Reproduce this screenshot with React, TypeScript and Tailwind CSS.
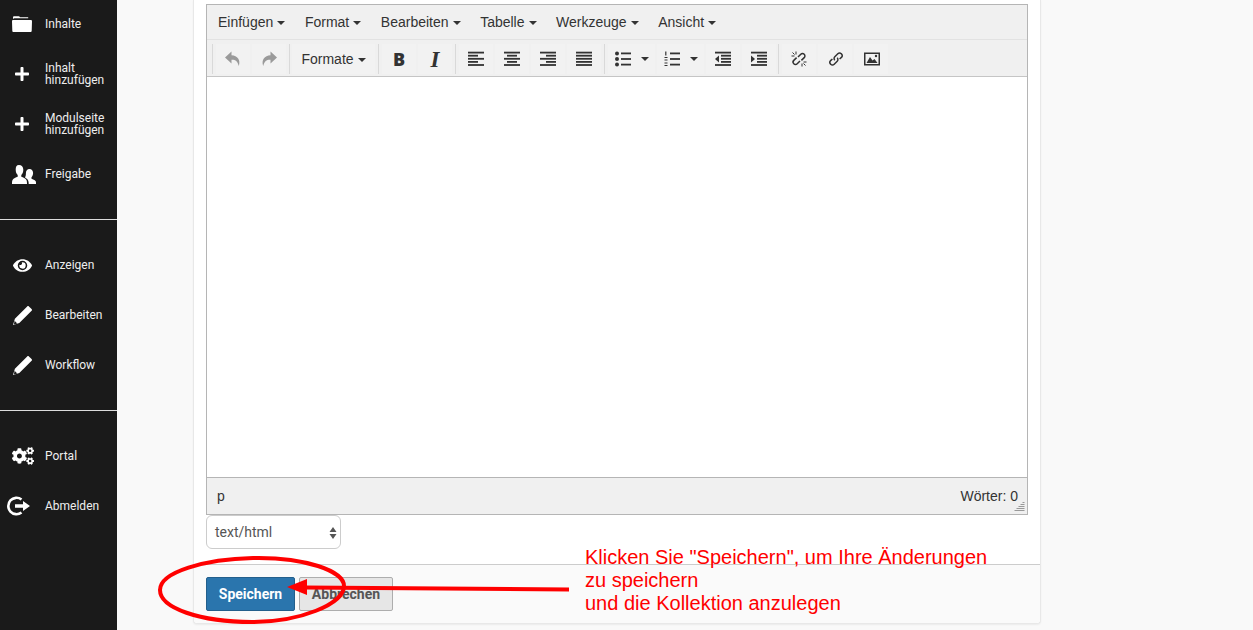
import { ReactNode } from "react"
import { FaCogs, FaEye, FaPlus } from "react-icons/fa"

const FolderIcon = () => (
  <svg viewBox="0 0 20 16" className="ml-[12px] w-[20px] h-[16px]" fill="currentColor">
    <path d="M1 1.500C1 .7 1.500 .3 2.200 .3h4.500c.6 0 1 .4 1.300 .9h8.200v1.100H2.500c-.8 0-1.300 .4-1.500 1z" />
    <path d="M0 5.200C0 4.400.5 3.900 1.300 3.900h17.400c.8 0 1.300 .5 1.300 1.300l-.3 9.500c0 .8-.5 1.300-1.300 1.300H1.600c-.8 0-1.300-.5-1.300-1.300z" />
  </svg>
)

const UsersIcon = () => (
  <svg viewBox="0 0 25 19" className="ml-[12px] w-[25px] h-[19px]" fill="currentColor">
    <path d="M7 0c2.600 0 4.300 2 4.300 4.800 0 2.300-.9 4.300-2 5.300v1.700c1.800.7 4.200 1.700 5 3 .6.900.7 2.300.7 4.200H0c0-1.900.1-3.300.7-4.200.8-1.300 3.200-2.300 5-3V10.100c-1.100-1-2-3-2-5.300C3.700 2 4.400 0 7 0z" />
    <path d="M17.500 4c2.300 0 3.600 1.700 3.600 4 0 1.900-.8 3.500-1.600 4.300v1.500c1.500.5 3.200 1.300 4 2.300.6.700.5 1.800.5 2.900h-7.300c0-2-.3-3.400-1.100-4.500-.6-.8-1.600-1.500-2.600-2.100.3-.6.600-1.200.7-1.900.2-.7.2-1.500.2-2.500C13.900 5.700 15.200 4 17.500 4z" />
  </svg>
)

const PencilIcon = () => (
  <svg viewBox="0 0 19 19" className="ml-[13px] w-[19px] h-[19px]" fill="currentColor">
    <path d="M14.200.4c.5-.5 1.200-.5 1.700 0l2.700 2.700c.5.5.5 1.200 0 1.700L6.300 17.100 0 19l1.900-6.300z" />
    <path d="M1.600 14.800l2.600 2.600-3.300 1z" fill="#1a1a1a" />
  </svg>
)

const LogoutIcon = () => (
  <svg viewBox="0 0 24 20" className="ml-[7px] w-[24px] h-[20px]" fill="none" stroke="currentColor">
    <path d="M14.500 3.500A8.200 8.200 0 1 0 14.500 16.500" strokeWidth="2.600" />
    <path d="M8 8.300h8V5l7 5-7 5v-3.300H8z" fill="currentColor" stroke="none" />
  </svg>
)

const navGroups: { label: ReactNode; icon: ReactNode }[][] = [
  [
    { label: "Inhalte", icon: <FolderIcon /> },
    { label: <>Inhalt<br />hinzufügen</>, icon: <FaPlus className="ml-[14px] w-[16px] h-[16px]" /> },
    { label: <>Modulseite<br />hinzufügen</>, icon: <FaPlus className="ml-[14px] w-[16px] h-[16px]" /> },
    { label: "Freigabe", icon: <UsersIcon /> },
  ],
  [
    { label: "Anzeigen", icon: <FaEye className="ml-[13px] w-[19px] h-[19px]" /> },
    { label: "Bearbeiten", icon: <PencilIcon /> },
    { label: "Workflow", icon: <PencilIcon /> },
  ],
  [
    { label: "Portal", icon: <FaCogs className="ml-[12px] w-[22px] h-[22px]" /> },
    { label: "Abmelden", icon: <LogoutIcon /> },
  ],
]

function NavItem({ label, icon }: { label: ReactNode; icon: ReactNode }) {
  return (
    <div className="relative flex items-center h-[50px] text-white">
      <div className="w-[45px] shrink-0 flex items-center">{icon}</div>
      <div className="text-[12px] leading-[12px] text-[#eeeeee]">{label}</div>
    </div>
  )
}

function Sidebar() {
  return (
    <div className="w-[117px] shrink-0 h-full bg-[#1a1a1a] font-['Roboto',sans-serif]">
      <div className="-mt-[1px] pb-[20px] border-b border-[#dddddd]">
        {navGroups[0].map((item, i) => <NavItem key={i} {...item} />)}
      </div>
      <div className="py-[20px] border-b border-[#dddddd]">
        {navGroups[1].map((item, i) => <NavItem key={i} {...item} />)}
      </div>
      <div className="py-[20px]">
        {navGroups[2].map((item, i) => <NavItem key={i} {...item} />)}
      </div>
    </div>
  )
}

const Caret = ({ className = "ml-[4px]" }: { className?: string }) => (
  <span className={`inline-block border-x-[4px] border-x-transparent border-t-[4px] border-t-[#333333] align-middle ${className}`} />
)

function MenuItem({ label }: { label: string }) {
  return (
    <div className="mr-[19.6px] whitespace-nowrap">
      {label}
      <Caret />
    </div>
  )
}

// rows of bars for the align and indent buttons, [x, y, width]
const Lines = ({ rows }: { rows: number[][] }) => (
  <svg viewBox="0 0 16 16" className="w-[16px] h-[16px]" fill="#333333">
    {rows.map(([x, y, w], i) => <rect key={i} x={x} y={y} width={w} height="1.800" />)}
  </svg>
)

const G = ({ children }: { children: ReactNode }) => (
  <svg viewBox="0 0 16 16" className="w-[16px] h-[16px]" fill="#333333">{children}</svg>
)

function ToolButton({ children, w = "w-[34px]" }: { children: ReactNode; w?: string }) {
  return <div className={`${w} h-[30px] bg-[#f2f2f2] flex items-center justify-center`}>{children}</div>
}

function ToolGroup({ children, className = "" }: { children: ReactNode; className?: string }) {
  return <div className={`h-[30px] border-l border-[#d9d9d9] pr-[2px] flex gap-[2px] ${className}`}>{children}</div>
}

const listBars = (
  <>
    <rect x="6" y="1.500" width="10" height="1.800" />
    <rect x="6" y="7.100" width="10" height="1.800" />
    <rect x="6" y="12.700" width="10" height="1.800" />
  </>
)

const indentBars = (
  <>
    <rect x="0" y="0.700" width="16" height="1.800" />
    <rect x="6" y="3.800" width="10" height="1.800" />
    <rect x="6" y="6.900" width="10" height="1.800" />
    <rect x="6" y="10" width="10" height="1.800" />
    <rect x="0" y="13.100" width="16" height="1.800" />
  </>
)

function Toolbar() {
  return (
    <div className="h-[38px] border-t border-[#e2e2e2] border-b border-b-[#c5c5c5] pl-[5px] pt-[4px] flex">
      <ToolGroup className="pl-[3px] pr-[3px]">
        <ToolButton>
          <G><path d="M6.500.5 0 6.500l6.500 6V8.700c3.500-.3 6 1 7.300 6.300C15.800 9 12.500 4.300 6.500 4.200z" fill="#9a9a9a" /></G>
        </ToolButton>
        <ToolButton>
          <G><path d="M9.500.5 16 6.500l-6.500 6V8.700c-3.500-.3-6 1-7.300 6.300C.2 9 3.500 4.300 9.500 4.200z" fill="#9a9a9a" /></G>
        </ToolButton>
      </ToolGroup>
      <ToolGroup className="pl-[2px] pr-[3px]">
        <ToolButton w="w-[83px]">
          <span className="whitespace-nowrap pt-[1px]">Formate<Caret /></span>
        </ToolButton>
      </ToolGroup>
      <ToolGroup className="pl-[3px] pr-[3px]">
        <ToolButton>
          <span className="font-['Open_Sans',sans-serif] font-extrabold text-[18px] text-[#333333] leading-none">B</span>
        </ToolButton>
        <ToolButton>
          <span className="font-['Liberation_Serif',serif] font-bold italic text-[23px] text-[#333333] leading-none">I</span>
        </ToolButton>
      </ToolGroup>
      <ToolGroup className="pl-[3px] pr-[3px]">
        <ToolButton><Lines rows={[[0, 0.700, 16], [0, 3.800, 10], [0, 6.900, 16], [0, 10, 10], [0, 13.100, 16]]} /></ToolButton>
        <ToolButton><Lines rows={[[0, 0.700, 16], [3, 3.800, 10], [0, 6.900, 16], [3, 10, 10], [0, 13.100, 16]]} /></ToolButton>
        <ToolButton><Lines rows={[[0, 0.700, 16], [6, 3.800, 10], [0, 6.900, 16], [6, 10, 10], [0, 13.100, 16]]} /></ToolButton>
        <ToolButton><Lines rows={[[0, 0.700, 16], [0, 3.800, 16], [0, 6.900, 16], [0, 10, 16], [0, 13.100, 16]]} /></ToolButton>
      </ToolGroup>
      <ToolGroup className="pl-[3px]">
        <ToolButton w="w-[47px]">
          <G>
            <circle cx="2" cy="2.400" r="2" /><circle cx="2" cy="8" r="2" /><circle cx="2" cy="13.600" r="2" />
            {listBars}
          </G>
          <Caret className="ml-[10px]" />
        </ToolButton>
        <ToolButton w="w-[47px]">
          <G>
            <rect x="1.200" y="0.500" width="1.200" height="4" />
            <rect x="0.500" y="6" width="3" height="1" /><rect x="0.500" y="8.500" width="3" height="1" />
            <rect x="0.500" y="11.500" width="3" height="1" /><rect x="0.500" y="14" width="3" height="1" />
            {listBars}
          </G>
          <Caret className="ml-[10px]" />
        </ToolButton>
        <ToolButton>
          <G>
            {indentBars}
            <path d="M4 4.500v7L0 8z" />
          </G>
        </ToolButton>
        <ToolButton>
          <G>
            {indentBars}
            <path d="M0 4.500v7L4 8z" />
          </G>
        </ToolButton>
      </ToolGroup>
      <ToolGroup className="pl-[3px]">
        <ToolButton>
          <svg viewBox="0 0 16 16" className="w-[16px] h-[16px]" fill="none" stroke="#333333" strokeWidth="1.500">
            <path d="M7 6L9.800 3.200A2.400 2.400 0 0 1 13.200 6.600L10.400 9.400" />
            <path d="M9 10L6.200 12.800A2.400 2.400 0 0 1 2.800 9.400L5.600 6.600" />
            <path d="M5 .5v3M.5 5h3M11 15.500v-3M15.500 11h-3M1.500 1.500l2 2M14.500 14.500l-2-2" strokeWidth="1" />
          </svg>
        </ToolButton>
        <ToolButton>
          <svg viewBox="0 0 16 16" className="w-[16px] h-[16px] ml-[1px]" fill="none" stroke="#333333" strokeWidth="1.500">
            <path d="M6.800 9.200a2.400 2.400 0 0 1 0-3.400l3-3a2.500 2.500 0 0 1 3.500 0l.1.1a2.500 2.500 0 0 1 0 3.500L11.600 8" />
            <path d="M9.200 6.800a2.400 2.400 0 0 1 0 3.400l-3 3a2.500 2.500 0 0 1-3.500 0l-.1-.1a2.500 2.500 0 0 1 0-3.500L4.400 8" />
          </svg>
        </ToolButton>
        <ToolButton>
          <svg viewBox="0 0 16 16" className="w-[16px] h-[16px] ml-[1px]" fill="#333333">
            <path fillRule="evenodd" d="M0 1.500h16v13H0zM1.500 3v10h13V3z" />
            <path d="M2.500 12l3.500-6 2.500 3.500L10.500 8l3 4z" />
            <circle cx="12" cy="5" r="1.200" />
          </svg>
        </ToolButton>
      </ToolGroup>
    </div>
  )
}

function Editor() {
  return (
    <div className="border border-[#b5b5b5] font-['Liberation_Sans',sans-serif] text-[14px] text-[#333333]">
      <div className="bg-[#f0f0f0]">
        <div className="h-[34px] pl-[11px] flex items-center">
          {["Einfügen", "Format", "Bearbeiten", "Tabelle", "Werkzeuge", "Ansicht"].map((m) => (
            <MenuItem key={m} label={m} />
          ))}
        </div>
        <Toolbar />
      </div>
      <div className="h-[400px] bg-white" />
      <div className="relative h-[37px] bg-[#f0f0f0] border-t border-[#b5b5b5] pl-[10px] pr-[9px] flex items-center justify-between">
        <span>p</span>
        <span>Wörter: 0</span>
        <svg viewBox="0 0 11 10" className="absolute right-[2px] bottom-[2px] w-[11px] h-[10px]" stroke="#999999" strokeWidth="1">
          <path d="M8.500.5h2M6.500 2.500h4M4.500 4.500h6M2.500 6.500h8M.5 8.500h10" />
        </svg>
      </div>
    </div>
  )
}

function Card() {
  return (
    <div className="w-[848px] h-[624px] bg-white rounded-b-[4px] border-x border-b border-[#e8e8e8] shadow-[0_1px_2px_rgba(0,0,0,0.06)] flex flex-col font-['Roboto',sans-serif]">
      <div className="flex-1 px-[12px] pt-[4px]">
        <Editor />
        <div className="relative w-[135px] h-[34px] rounded-[6px] border border-[#cccccc] bg-white pl-[8px] flex items-center text-[14px] text-[#555555]">
          text/html
          <svg viewBox="0 0 8 14" className="absolute right-[3px] top-[10px] w-[8px] h-[14px]" fill="#555555">
            <path d="M4 1l3.500 5h-7zM4 13L.5 8h7z" />
          </svg>
        </div>
      </div>
      <div className="h-[59px] bg-[#fafafa] border-t border-[#cccccc] pl-[12px] pt-[12px] flex gap-[4px] rounded-b-[4px]">
        <div className="w-[89px] h-[34px] rounded-[2px] bg-[#2a75ad] border border-[#235f8c] text-white font-bold text-[14px] flex items-center justify-center">
          Speichern
        </div>
        <div className="w-[94px] h-[34px] rounded-[2px] bg-[#e6e6e6] border border-[#adadad] text-[#555555] font-bold text-[14px] flex items-center justify-center">
          Abbrechen
        </div>
      </div>
    </div>
  )
}

export default function App() {
  return (
    <div className="relative w-[1253px] h-[630px] overflow-hidden bg-[#f9f9f9] flex">
      <Sidebar />
      <div className="pl-[76px]">
        <Card />
      </div>

      {/* annotation drawn on top of the screenshot */}
      <svg className="absolute left-0 top-0 w-[1253px] h-[630px] pointer-events-none" viewBox="0 0 1253 630" fill="none" stroke="#ff0000">
        <path d="M253 558C305 557 344 571 344 586C344 604 300 622 252 622C200 622 160 608 160 590C160 572 205 559 253 558Z" strokeWidth="4" />
        <path d="M305 587.500L569 589.500" strokeWidth="4" />
        <path d="M287 587L307 579V595Z" fill="#ff0000" stroke="none" />
      </svg>
      <div className="absolute left-[585px] top-[546px] text-[20px] leading-[23px] text-[#ff0000] font-['Liberation_Sans',sans-serif] whitespace-nowrap">
        Klicken Sie "Speichern", um Ihre Änderungen<br />
        zu speichern<br />
        und die Kollektion anzulegen
      </div>
    </div>
  )
}
